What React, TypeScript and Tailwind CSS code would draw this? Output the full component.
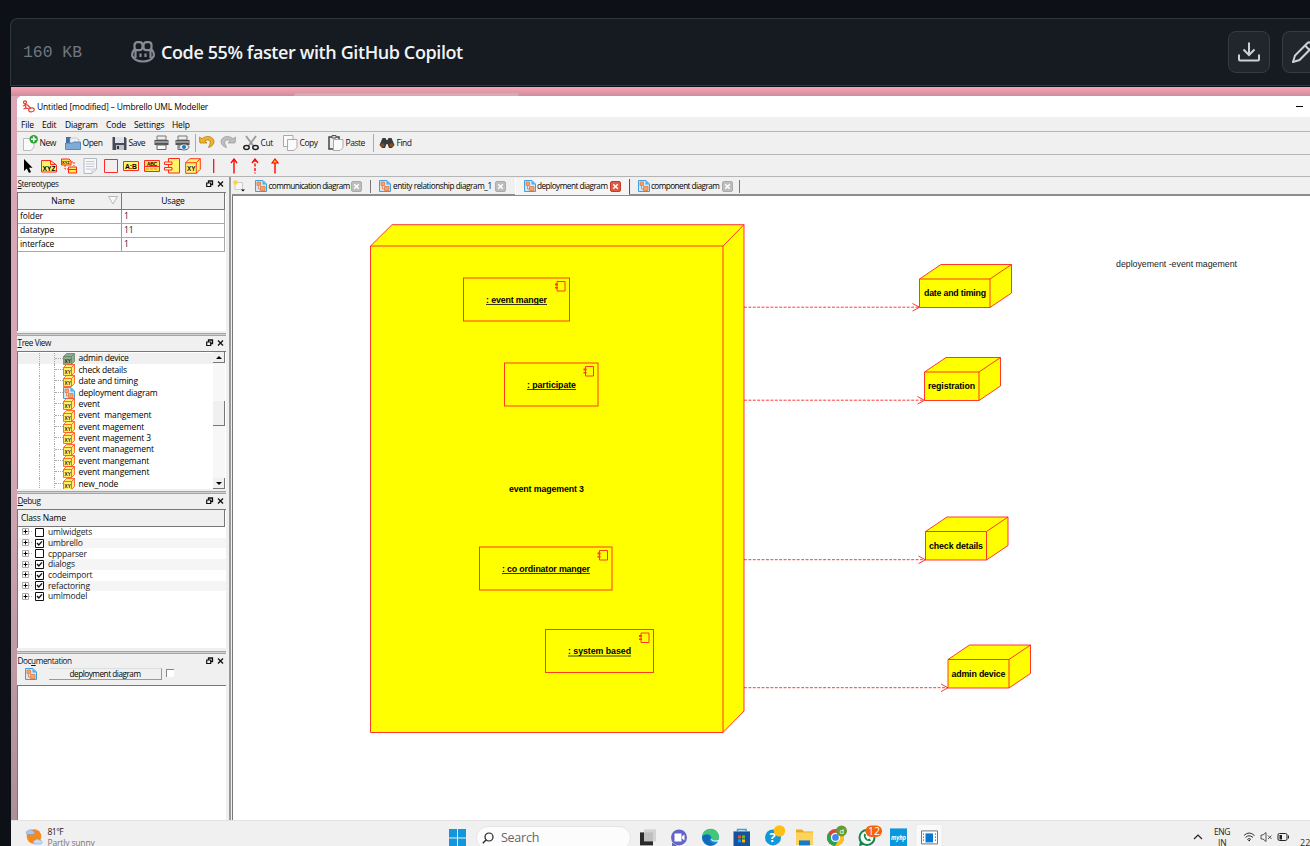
import React from 'react';

const BASE = 'whitespace-pre leading-none';

function NodeIcon({ size = 16, dim = false, className = '' }: { size?: number; dim?: boolean; className?: string }) {
  return (
    <svg width={size} height={size} viewBox="0 0 16 16" className={`shrink-0 ${className}`}>
      <path d="M.7 4.700 4.700.7H15.300V11.300L11.300 15.300H.7Z" fill={dim ? '#8fae8c' : '#fff36b'} stroke={dim ? '#5d7f6c' : '#ff3a1a'} />
      <path d="M.7 4.700H11.300V15.300M11.300 4.700 15.300.7" fill="none" stroke={dim ? '#5d7f6c' : '#ff3a1a'} />
      <text x="2" y="13" fontSize="7" fontWeight="700" textLength="8.5" lengthAdjust="spacingAndGlyphs" fontFamily="Liberation Sans, sans-serif" fill="#222">XY</text>
    </svg>
  );
}

function DiagramIcon({ className = '' }: { className?: string }) {
  return (
    <svg width="12" height="12" viewBox="0 0 12 12" className={`shrink-0 ${className}`}>
      <path d="M.5.5H8L11.500 4V11.500H.5Z" fill="#cfe8fb" stroke="#3f9fe0" />
      <path d="M7.500 .5V4.500H11.500Z" fill="#4aaef0" />
      <path d="M2 2H5.500V5.500H2ZM5.500 6.500H10V10.500H5.500Z" fill="#f3a468" stroke="#e57b45" strokeWidth=".8" />
      <path d="M3.500 6V9H6" fill="none" stroke="#e57b45" strokeWidth=".8" />
    </svg>
  );
}

function DockTitle({ first, rest, mid }: { first: string; rest: string; mid?: [string, string] }) {
  return (
    <div className="flex h-[14px] shrink-0 items-center justify-between bg-[#f0f0f0] pr-[1px] pl-[0.5px]">
      <span className={`${BASE} text-[8.200px] tracking-[-0.400px] text-[#111]`}>
        {mid ? (
          <>{first}<u>{mid[0]}</u>{mid[1]}</>
        ) : (
          <><u>{first}</u>{rest}</>
        )}
      </span>
      <svg width="19" height="8" viewBox="0 0 19 8">
        <path d="M2.500 3V1H6.500V4.500H5" fill="none" stroke="#111" strokeWidth="1.300" />
        <path d="M.7 3H4.700V6.500H.7Z" fill="#f0f0f0" stroke="#111" strokeWidth="1.200" />
        <path d="M12 1.500 17 6.500M17 1.500 12 6.500" stroke="#111" strokeWidth="1.300" />
      </svg>
    </div>
  );
}

function Splitter() {
  return <div className="h-[3px] shrink-0 border-t border-b border-[#a5a5a5] bg-[#d0d0d0]" />;
}

const treeItems = ['admin device', 'check details', 'date and timing', 'deployment diagram', 'event', 'event  mangement', 'event magement', 'event magement 3', 'event management', 'event mangemant', 'event mangement', 'new_node'];

const debugItems: [string, boolean][] = [['umlwidgets', false], ['umbrello', true], ['cppparser', false], ['dialogs', true], ['codeimport', true], ['refactoring', true], ['umlmodel', true]];

function LeftDock() {
  return (
    <div className="flex w-[209px] shrink-0 flex-col bg-[#f0f0f0]">
      <DockTitle first="S" rest="tereotypes" />
      <div className="mt-[1px] flex h-[139px] shrink-0 flex-col border-t border-l border-[#777] bg-white pr-[1px]">
        <div className="grid h-[17px] shrink-0 grid-cols-[104px_1fr] border-r border-b border-[#777] bg-[#f0f0f0] text-[8.5px]">
          <div className="relative flex items-center justify-center border-r border-[#777] pr-[13px]">
            <span className={`${BASE} tracking-[-0.1px]`}>Name</span>
            <svg className="absolute top-[3px] right-[3px]" width="10" height="9" viewBox="0 0 10 9"><path d="M.5 .5H9.500L5 8Z" fill="#f7f7f7" stroke="#aaa" strokeWidth=".8" /></svg>
          </div>
          <div className="flex items-center justify-center"><span className={`${BASE} tracking-[-0.2px]`}>Usage</span></div>
        </div>
        {[['folder', '1'], ['datatype', '11'], ['interface', '1']].map(([a, b]) => (
          <div key={a} className="grid h-[14px] shrink-0 grid-cols-[104px_1fr] border-r border-b border-[#aaa] text-[8.5px]">
            <div className="flex items-center border-r border-[#999] pl-[2px]"><span className={`${BASE} tracking-[-0.1px]`}>{a}</span></div>
            <div className="flex items-center pl-[2px]"><span className={`${BASE} text-[#301030]`}>{b}</span></div>
          </div>
        ))}
      </div>
      <div className="h-[2px] shrink-0" />
      <Splitter />
      <DockTitle first="T" rest="ree View" />
      <div className="mt-[1px] flex h-[138px] shrink-0 border-t border-l border-[#777] bg-white pr-[1px]">
        <div className="flex flex-1 flex-col overflow-hidden pt-[1px]">
          {treeItems.map((t, i) => (
            <div key={t} className={`flex h-[11.380px] shrink-0 items-center ${i === 0 ? 'bg-[#f0f0f0]' : ''}`}>
              <div className="ml-[21px] h-full w-[15px] shrink-0 border-l border-dotted border-[#aaa]" />
              <div className="h-full w-[8.500px] shrink-0 border-l border-dotted border-[#aaa]"><div className="h-1/2 w-[8px] border-b border-dotted border-[#aaa]" /></div>
              {i === 3 ? <DiagramIcon /> : <NodeIcon size={12} dim={i === 0} />}
              <span className={`${BASE} ml-[4px] text-[8.5px] ${i < 4 ? 'tracking-[-0.2px]' : 'tracking-[-0.1px]'}`}>{t}</span>
            </div>
          ))}
        </div>
        <div className="flex w-[12px] shrink-0 flex-col bg-[#f7f7f7]">
          <div className="flex h-[11px] items-center justify-center border-r border-b border-[#777] bg-[#f0f0f0]"><svg width="6" height="3"><path d="M0 3 3 0 6 3Z" /></svg></div>
          <div className="mt-[38px] h-[25px] border-r border-b border-[#777] bg-[#f0f0f0]" />
          <div className="mt-auto flex h-[11px] items-center justify-center border-r border-b border-[#777] bg-[#f0f0f0]"><svg width="6" height="3"><path d="M0 0 3 3 6 0Z" /></svg></div>
        </div>
      </div>
      <div className="h-[2px] shrink-0" />
      <Splitter />
      <DockTitle first="D" rest="ebug" />
      <div className="mt-[1px] flex h-[139px] shrink-0 flex-col border-t border-l border-[#777] bg-white">
        <div className="mr-[1px] flex h-[17px] shrink-0 items-center border-r border-b border-[#777] bg-[#f0f0f0] pt-[1px] pl-[3px]"><span className={`${BASE} text-[8.5px] tracking-[-0.15px]`}>Class Name</span></div>
        {debugItems.map(([t, on], i) => (
          <div key={t} className={`flex h-[10.73px] shrink-0 items-center pl-[4px] ${i % 2 ? 'bg-[#f5f5f5]' : ''}`}>
            <svg width="10" height="8" viewBox="0 0 10 8"><path d="M.5.5H6.500V6.500H.5Z" fill="#fff" stroke="#aaa" /><path d="M1.500 3.500H5.500M3.500 1.500V5.500" stroke="#000" /><path d="M7 3.500H10" stroke="#bbb" strokeDasharray="1 1" /></svg>
            <svg width="9" height="9" viewBox="0 0 9 9" className="ml-[3px]"><path d="M.5.5H8.500V8.500H.5Z" fill="#fff" stroke="#111" />{on && <path d="M2 4 3.800 6 7 2.400" fill="none" stroke="#111" strokeWidth="1.400" />}</svg>
            <span className={`${BASE} ml-[4px] text-[8.5px] tracking-[-0.15px] text-[#222]`}>{t}</span>
          </div>
        ))}
      </div>
      <div className="h-[3px] shrink-0" />
      <Splitter />
      <DockTitle first="Doc" rest="" mid={['u', 'mentation']} />
      <div className="flex h-[17px] shrink-0 items-start pl-[8px]">
        <DiagramIcon />
        <div className="ml-[12px] flex h-[12px] w-[113px] items-center justify-center border-t border-r border-b border-t-[#ddd] border-r-[#999] border-b-[#999] text-[8.200px]"><span className={`${BASE} tracking-[-0.470px]`}>deployment diagram</span></div>
        <div className="mt-[1px] ml-[4px] h-[8px] w-[8px] border-t border-l border-[#888] bg-white" />
      </div>
      <div className="flex-1 border-t border-l border-[#777] bg-white" />
    </div>
  );
}

function Lbl({ children }: { children: string }) {
  return <span className={`${BASE} ml-[1.500px] pt-[1px] text-[8.5px] tracking-[-0.470px] text-[#111]`}>{children}</span>;
}

const Page = ({ x = 0, y = 0 }: { x?: number; y?: number }) => <path d={`M${x + 0.5} ${y + 0.5}h9.5v8l-3 3H${x + 0.5}Z`} fill="#fafafa" stroke="#aaa" />;

function Printer({ eye = false }: { eye?: boolean }) {
  return (
    <svg width="15" height="16" viewBox="0 0 15 16">
      <path d="M3 1H12V5H3Z" fill="#eee" stroke="#777" /><path d="M.5 5H14.500V10H.5Z" fill="#555" /><path d="M1 7H14" stroke="#ddd" />
      <path d="M3 10H12V14.500H3Z" fill="#fafafa" stroke="#666" />
      {eye && <g><ellipse cx="9" cy="12" rx="5" ry="3" fill="#dbe9f7" stroke="#444" strokeWidth=".7" /><circle cx="9" cy="12" r="2" fill="#2877b8" /></g>}
    </svg>
  );
}

function Toolbar() {
  return (
    <div className="flex h-[23px] shrink-0 items-center border-b border-[#b5b5b5] pl-[6px]">
      <div className="flex w-[42px] items-center">
        <svg width="15" height="16" viewBox="0 0 15 16"><path d="M.5 3.500H11V12L8 15.500H.5Z" fill="#fafafa" stroke="#bbb" /><circle cx="10.700" cy="4.300" r="4.200" fill="#27a52b" /><path d="M8 4.300H13.400M10.700 1.600V7" stroke="#fff" strokeWidth="1.600" /></svg>
        <Lbl>New</Lbl>
      </div>
      <div className="flex w-[47px] items-center">
        <svg width="16" height="16" viewBox="0 0 16 16"><path d="M1 14V2H6V4H14V13Z" fill="#426fa5" /><path d="M5 3H12L14 5V10H5Z" fill="#eee" stroke="#aaa" strokeWidth=".5" /><path d="M.5 14.500V8H7L9 7H15.500V14.500Z" fill="#7eabd8" stroke="#4778ad" strokeWidth=".8" /></svg>
        <Lbl>Open</Lbl>
      </div>
      <div className="flex w-[42px] items-center">
        <svg width="15" height="16" viewBox="0 0 15 16"><path d="M.5 2H13L14.500 3.500V15H.5Z" fill="#454b57" /><path d="M3 2H12V8H3Z" fill="#dfe2e7" /><path d="M4 10H12V15H4Z" fill="#bcc3ce" /><path d="M5 11H7V14H5Z" fill="#333" /></svg>
        <Lbl>Save</Lbl>
      </div>
      <div className="w-[21px]"><Printer /></div>
      <div className="w-[20px]"><Printer eye /></div>
      <div className="h-[18px] w-[4px] border-l border-[#aaa]" />
      <svg className="mr-[5px] mb-[2px]" width="16" height="14" viewBox="0 0 16 14"><path d="M0 2 1 8H8L5.700 5.800C9 4 12 5 11 9L9.500 12.500C15 11 17 5.500 12.500 2.500 9.500.7 6 1.200 3.200 3.600Z" fill="#f1b22a" stroke="#a87510" strokeWidth=".7" /></svg>
      <svg className="mr-[7px] mb-[2px]" width="16" height="14" viewBox="0 0 16 14"><path d="M16 2 15 8H8L10.300 5.800C7 4 4 5 5 9L6.500 12.500C1 11-1 5.500 3.500 2.500 6.500.700 10 1.200 12.800 3.600Z" fill="#bdbdbd" stroke="#999" strokeWidth=".7" /></svg>
      <div className="flex w-[40px] items-center">
        <svg width="16" height="16" viewBox="0 0 16 16"><path d="M3 1 10.500 11M13 1 5.500 11" stroke="#999" strokeWidth="1.800" /><ellipse cx="3.500" cy="12.500" rx="2.700" ry="2" fill="none" stroke="#222" strokeWidth="1.500" /><ellipse cx="12.500" cy="12.500" rx="2.700" ry="2" fill="none" stroke="#222" strokeWidth="1.500" /></svg>
        <Lbl>Cut</Lbl>
      </div>
      <div className="flex w-[45px] items-center">
        <svg width="15" height="16" viewBox="0 0 15 16"><Page x={0} y={0} /><Page x={4} y={4} /></svg>
        <Lbl>Copy</Lbl>
      </div>
      <div className="flex w-[45px] items-center">
        <svg width="16" height="16" viewBox="0 0 16 16"><path d="M1 2H11V14H1Z" fill="#eee" stroke="#444" strokeWidth="1.500" /><path d="M4 .5H8V3H4Z" fill="#ddd" stroke="#555" /><Page x={5} y={4} /></svg>
        <Lbl>Paste</Lbl>
      </div>
      <div className="h-[18px] w-[6px] border-l border-[#aaa]" />
      <svg width="16" height="12" viewBox="0 0 16 12"><path d="M3.500 1H6.500L7.500 3H8.500L9.500 1H12.500L15.500 8 13 11H10L8.500 7H7.500L6 11H3L.5 8Z" fill="#3a3a3a" /><circle cx="3.500" cy="8.300" r="2" fill="#8b4a1c" /><circle cx="12.500" cy="8.300" r="2" fill="#8b4a1c" /></svg>
      <Lbl>Find</Lbl>
    </div>
  );
}

function WorkTools() {
  const cell = 'flex w-[20.6px] shrink-0 justify-center';
  const t = { fontFamily: 'Liberation Sans, sans-serif', fontWeight: 700 };
  return (
    <div className="flex h-[22px] shrink-0 items-center border-b border-[#b5b5b5] pl-[1px]">
      <div className={cell}><svg width="16" height="16" viewBox="0 0 16 16"><path d="M4 1V13L6.800 10.500 9 15 11 14 9 9.800H12.500Z" /></svg></div>
      <div className={cell}><svg width="16" height="16" viewBox="0 0 16 16"><path d="M.5 2.500H9.500L15.500 7V14H.5Z" fill="#fff36b" stroke="#ff2a1a" /><path d="M9.500 2.500V6.500H15" fill="none" stroke="#ff2a1a" /><text {...t} x="1.500" y="12.500" fontSize="6.500" textLength="13" lengthAdjust="spacingAndGlyphs">XYZ</text></svg></div>
      <div className={cell}><svg width="16" height="16" viewBox="0 0 16 16"><path d="M.5 1H8L10 3V7H.5Z" fill="#ffe44b" stroke="#ff2a1a" /><path d="M10 4H13V8M4 7V11H7" fill="none" stroke="#ff2a1a" strokeDasharray="2 1" /><path d="M7.500 9H15.500V15H7.500ZM7.500 11.500H15.500" fill="#ffe44b" stroke="#ff2a1a" /><text {...t} x="1" y="6" fontSize="4">XYZ</text></svg></div>
      <div className={cell}><svg width="16" height="16" viewBox="0 0 16 16"><path d="M2 .5H14.500V11L10 15.500H2Z" fill="#f5f7f9" stroke="#b3b8bd" /><path d="M4 3.500H12.500M4 6H12.500M4 8.500H12M4 11H9M10 15V11H14" fill="none" stroke="#c2c8cf" /></svg></div>
      <div className={cell}><svg width="16" height="16" viewBox="0 0 16 16"><path d="M1.500 1.500H14.500V14.500H1.500Z" fill="#f5eeee" stroke="#ff2a2a" /></svg></div>
      <div className={cell}><svg width="16" height="16" viewBox="0 0 16 16"><path d="M.5 3.500H15.500V12.500H.5Z" fill="#fff36b" stroke="#ff2a1a" /><text {...t} x="2" y="10.500" fontSize="6.500" textLength="12" lengthAdjust="spacingAndGlyphs">A:B</text></svg></div>
      <div className={cell}><svg width="16" height="16" viewBox="0 0 16 16"><path d="M.5 2.500H15.500V13.500H.5ZM.5 8.500H15.500" fill="#ffe44b" stroke="#ff2a1a" /><path d="M2 11H14" stroke="#ff8a4a" strokeDasharray="3 1" /><text {...t} x="3" y="7.500" fontSize="5" textLength="10">ABC</text></svg></div>
      <div className={cell}><svg width="16" height="16" viewBox="0 0 16 16"><path d="M4.500.5H15.500V15H4.500Z" fill="#fff36b" stroke="#ff2a1a" /><path d="M.5 4H8V6.500H.5ZM.5 9.500H8V12H.5Z" fill="#fffac0" stroke="#ff2a1a" /></svg></div>
      <div className={cell}><NodeIcon /></div>
      <div className={cell}><svg width="16" height="16" viewBox="0 0 16 16"><path d="M7.700 1V15" stroke="red" strokeWidth="1.200" /></svg></div>
      <div className={cell}><svg width="16" height="16" viewBox="0 0 16 16"><path d="M8 1V15.500" stroke="red" strokeWidth="1.400" /><path d="M5 5 8 1 11 5" fill="none" stroke="red" strokeWidth="1.300" /></svg></div>
      <div className={cell}><svg width="16" height="16" viewBox="0 0 16 16"><path d="M8 1V15.500" stroke="red" strokeWidth="1.400" strokeDasharray="3 1.500" /><path d="M5 5 8 1 11 5" fill="none" stroke="red" strokeWidth="1.300" /></svg></div>
      <div className={cell}><svg width="16" height="16" viewBox="0 0 16 16"><path d="M8 5V15.500" stroke="red" strokeWidth="1.400" /><path d="M5 5 8 1 11 5Z" fill="#ffe000" stroke="red" strokeWidth="1.200" /></svg></div>
    </div>
  );
}

function Close({ active = false }: { active?: boolean }) {
  return <svg width="11" height="11" viewBox="0 0 11 11" className="ml-[2px] shrink-0"><rect x=".5" y=".5" width="10" height="10" rx="1.500" fill={active ? '#dc5b42' : '#bdbdbd'} stroke={active ? '#c23d27' : '#ababab'} /><path d="M3.200 3.200 7.800 7.800M7.800 3.200 3.200 7.800" stroke="#fff" strokeWidth="1.500" /></svg>;
}

function Tabs() {
  const label = `${BASE} shrink-0 text-[8.200px]`;
  return (
    <div className="flex h-[19px] shrink-0 items-center border-b-2 border-[#8c8c8c] pt-[1px]">
      <svg className="mr-[10px] ml-[1px] shrink-0" width="12" height="12" viewBox="0 0 12 12"><path d="M2 2.500H9.500V9.500H2Z" fill="#f7f7f7" stroke="#ccc" /><circle cx="2.500" cy="2.500" r="2.200" fill="#ffd52e" /><path d="M8 9.500H12L10 11.500Z" /></svg>
      <div className="flex w-[115px] items-center"><DiagramIcon /><span className={`${label} ml-[1.5px] w-[80.5px] tracking-[-0.57px]`}>communication diagram</span><Close /></div>
      <div className="h-[13px] w-[9px] border-l border-[#777]" />
      <div className="flex w-[136px] items-center"><DiagramIcon /><span className={`${label} ml-[2px] w-[100px] tracking-[-0.43px]`}>entity relationship diagram_1</span><Close /></div>
      <div className="flex h-[17px] w-[113.5px] items-center border-l border-[#fff] bg-[#f5f5f5] pl-[7.5px]"><DiagramIcon /><span className={`${label} ml-[1.5px] w-[70.5px] tracking-[-0.5px]`}>deployment diagram</span><Close active /></div>
      <div className="h-[15px] w-[9px] border-l border-[#555]" />
      <div className="flex w-[101.5px] items-center"><DiagramIcon /><span className={`${label} ml-[1.5px] w-[69px] tracking-[-0.55px]`}>component diagram</span><Close /></div>
      <div className="h-[13px] border-l border-[#777]" />
    </div>
  );
}

const boxes = [
  { x: 463.5, y: 278, w: 106, label: ': event manger', tx: 486, tw: 61 },
  { x: 504.5, y: 363, w: 93.5, label: ': participate', tx: 527, tw: 49 },
  { x: 479.5, y: 547, w: 132.5, label: ': co ordinator manger', tx: 502, tw: 88 },
  { x: 545.5, y: 629.5, w: 108, label: ': system based', tx: 568, tw: 63 },
];

const nodes = [
  { x: 919.5, y: 279, w: 70.5, label: 'date and timing', tx: 924, tw: 62 },
  { x: 924.5, y: 372, w: 54.5, label: 'registration', tx: 928, tw: 47 },
  { x: 925.5, y: 531.5, w: 61, label: 'check details', tx: 929, tw: 54 },
  { x: 948, y: 659.5, w: 61, label: 'admin device', tx: 951.5, tw: 54 },
];

function Diagram() {
  return (
    <svg className="block" width="1077" height="624" viewBox="233 196 1077 624" fontFamily="Liberation Sans, Arial, sans-serif" fontSize="8.800">
      <g fill="#ff0" stroke="#f22" strokeWidth=".9">
        <path d="M370.500 246 392 224.700H744V711L723 732.500H370.500Z" />
        <path d="M370.500 246H723V732.500M723 246 744 224.700" fill="none" />
      </g>
      <text x="509" y="492" fontWeight="700" textLength="75">event magement 3</text>
      {boxes.map((b) => (
        <g key={b.label}>
          <rect x={b.x} y={b.y} width={b.w} height="43" fill="#ff0" stroke="#ff3b1a" />
          <path d={`M${b.x + b.w - 12.5} ${b.y + 3.5}h8v9.500h-8Z`} fill="#ff0" stroke="#ff3b1a" />
          <path d={`M${b.x + b.w - 14.5} ${b.y + 5.5}h3v2h-3ZM${b.x + b.w - 14.5} ${b.y + 9}h3v1.500h-3Z`} fill="#ff3b1a" />
          <text x={b.tx} y={b.y + 24.9} fontWeight="700" textLength={b.tw}>{b.label}</text>
          <path d={`M${b.tx} ${b.y + 26.5}h${b.tw}`} stroke="#222" strokeWidth=".9" />
        </g>
      ))}
      {nodes.map((n) => (
        <g key={n.label}>
          <path d={`M744 ${n.y + 28.2}H${n.x}`} stroke="#f22" strokeWidth=".9" strokeDasharray="2.900 1.500" />
          <path d={`M${n.x - 7} ${n.y + 24.5}l7 3.800 -7 3.800`} fill="none" stroke="#f22" strokeWidth=".9" />
          <path d={`M${n.x} ${n.y}l21.500 -14.500h${n.w}v28.500l-21.500 14.500h${-n.w}Z`} fill="#ff0" stroke="#f22" strokeWidth=".9" />
          <path d={`M${n.x} ${n.y}h${n.w}v28.500m0 -28.500l21.500 -14.500`} fill="none" stroke="#f22" strokeWidth=".9" />
          <text x={n.tx} y={n.y + 17.2} fontWeight="700" textLength={n.tw}>{n.label}</text>
        </g>
      ))}
      <text x="1116" y="267" textLength="121" fill="#222">deployement -event magement</text>
    </svg>
  );
}

function Taskbar() {
  return (
    <div className="flex h-[26px] shrink-0 border-t border-[#e2e2e2] bg-[#f0f0f0] font-['Open_Sans',sans-serif]">
      <div className="flex w-[438px] shrink-0 pt-[5px] pl-[14px]">
        <svg className="mt-[2px]" width="18" height="18" viewBox="0 0 18 18"><circle cx="9" cy="8.500" r="7.300" fill="#f78a1d" /><path d="M2 6.500A2.300 2.300 0 0 1 3.500 2.500 3 3 0 0 1 8 3 2.200 2.200 0 0 1 9 6.500Z" fill="#a9c6ee" stroke="#6c94cf" strokeWidth=".5" /><path d="M9 16A2.300 2.300 0 0 1 10 12 3 3 0 0 1 14.500 12 2.200 2.200 0 0 1 16 16Z" fill="#c6dcf8" stroke="#6c94cf" strokeWidth=".5" /></svg>
        <div className="ml-[4.500px] text-[8.5px] leading-[11px] text-[#222]"><div className="tracking-[-0.5px]">81°F</div><div className="tracking-[-0.150px] whitespace-nowrap text-[#777]">Partly sunny</div></div>
      </div>
      <svg className="mt-[8px] w-[17px] shrink-0" height="18" viewBox="0 0 17 18"><path d="M0 0H8V8.500H0ZM9 0H17V8.500H9ZM0 9.500H8V18H0ZM9 9.500H17V18H9Z" fill="#1496df" /></svg>
      <div className="mt-[5px] ml-[10px] flex h-[24px] w-[155px] shrink-0 rounded-full border border-[#e5e5e5] bg-[#fcfcfc] pt-[5px] pl-[5px]">
        <svg width="12" height="12" viewBox="0 0 12 12"><circle cx="7" cy="5" r="4" fill="none" stroke="#222" strokeWidth="1.200" /><path d="M4 8 .8 11.300" stroke="#222" strokeWidth="1.300" /></svg>
        <span className="ml-[7px] text-[12.5px] leading-[12px] tracking-[-0.25px] text-[#666]">Search</span>
      </div>
      <svg className="block shrink-0" width="312" height="26" viewBox="631 820.600 312 26">
        <path d="M640 832H653V845H640Z" fill="#2b2b2b" /><path d="M644 829H656V841H644Z" fill="#cfcfcf" opacity=".9" />
        <circle cx="679" cy="837" r="8" fill="#6264c7" /><path d="M672 842V846H678Z" fill="#6264c7" /><path d="M674.500 833H681.500V841H674.500ZM682 836 684.500 834V840L682 838Z" fill="#fff" />
        <circle cx="710.500" cy="837" r="8.500" fill="#1688d1" /><path d="M702 836C703 827 716 825 719 835 720 841 713 841 711 839 713 835 708 832 702 836Z" fill="#40c878" /><path d="M702 836C707 832 712 835 710 838 708 841 712 845 716 843 711 847 703 845 702 836Z" fill="#1268bd" /><path d="M711 839C713 841 716 841 719 840" fill="none" stroke="#e6f8ff" strokeWidth="1.200" />
        <path d="M733.500 831H750V846H733.500Z" fill="#17529c" /><path d="M737.500 831V829H746V831" fill="none" stroke="#27a8e0" strokeWidth="1.500" /><path d="M738 835H741V838H738Z" fill="#f25022" /><path d="M742 835H745V838H742Z" fill="#7fba00" /><path d="M738 839H741V842H738Z" fill="#00a4ef" /><path d="M742 839H745V842H742Z" fill="#ffb900" />
        <circle cx="773" cy="837" r="8" fill="#1297d8" /><text x="769.500" y="842" fontSize="13" fontWeight="700" fill="#fff">?</text><circle cx="779.500" cy="830.500" r="5.700" fill="#ffc013" />
        <path d="M796 829H802L804 831H813V844H796Z" fill="#e9aa22" /><path d="M796 832H813V844H796Z" fill="#ffd35b" /><path d="M799 840H810V845H799Z" fill="#137bc8" />
        <circle cx="835.500" cy="837" r="8.500" fill="#e34133" /><path d="M835.500 837 843.500 834A8.500 8.500 0 0 1 835 845.500Z" fill="#fbc116" /><path d="M835.500 837 828 833A8.500 8.500 0 0 0 835 845.500L839 839Z" fill="#2ba24c" /><circle cx="835.500" cy="837" r="4" fill="#4285f4" stroke="#fff" strokeWidth="1.300" /><circle cx="841.500" cy="830.500" r="5.500" fill="#669c35" /><text x="839.500" y="833.500" fontSize="7.500" fill="#fff">d</text>
        <circle cx="867" cy="837" r="7.500" fill="#f7fff9" stroke="#168450" strokeWidth="2" /><path d="M860 841 859 846 864 844Z" fill="#168450" /><path d="M864 833C863 838 867 842 871 840L869.500 838 867.500 839 865.500 836 866 834Z" fill="#168450" /><rect x="865.500" y="825" width="16.500" height="11.500" rx="5.700" fill="#f7630c" /><text x="868" y="834.500" fontSize="10" textLength="12" lengthAdjust="spacingAndGlyphs" fill="#fff">12</text>
        <path d="M890 828H907V846H890Z" fill="#0b97dc" /><text x="891" y="839.500" fontSize="7" fontStyle="italic" fontWeight="700" textLength="15" lengthAdjust="spacingAndGlyphs" fill="#fff">myhp</text>
        <rect x="916" y="824" width="26" height="24" rx="2" fill="#fafafa" stroke="#e2e2e2" strokeWidth=".5" /><path d="M921.500 830.500H937.500V843.500H921.500Z" fill="#fff" stroke="#777" /><path d="M925.500 833H933V842H925.500Z" fill="#0878d1" /><path d="M923.500 833V842M935.500 833V842" stroke="#777" strokeDasharray="1.500 1.500" />
      </svg>
      <svg className="block shrink-0" width="356" height="26" viewBox="943 821 356 26">
        <path d="M1194 839 1198 835 1202 839" fill="none" stroke="#222" strokeWidth="1.200" />
        <text x="1214" y="835" fontSize="8.500" textLength="16.500" fill="#222">ENG</text><text x="1218" y="846" fontSize="8.500" fill="#222">IN</text>
        <path d="M1244 835.500Q1249 830.500 1254.500 835.500M1245.500 837.500Q1249 834 1253 837.500M1247.300 839.500Q1249 837.500 1251 839.500" fill="none" stroke="#333" /><circle cx="1249.200" cy="840.500" r=".8" />
        <path d="M1261 835H1263L1266 832.500V841.500L1263 839H1261ZM1268 835.500 1271.500 839M1271.500 835.500 1268 839" fill="none" stroke="#444" strokeWidth=".9" />
        <rect x="1278" y="833.500" width="9" height="7" rx="1.500" fill="none" stroke="#222" /><path d="M1279.500 835H1282V839.500H1279.500ZM1288 835.500H1289V838.500H1288Z" fill="#222" />
      </svg>
      <span className="mt-[17px] ml-[1px] text-[9px] leading-[9px] text-[#333]">22</span>
    </div>
  );
}

export default function App() {
  return (
    <div className="flex h-[846px] w-[1310px] flex-col overflow-hidden bg-[#0d1117] pt-[18px] pl-[10px] font-['Open_Sans',sans-serif] text-black">
      <div className="flex h-[68px] shrink-0 items-center rounded-tl-[8px] border-t border-b border-l border-[#30363d] bg-[#161b22] pl-[12px]">
        <span className="w-[108px] shrink-0 pt-[3px] font-['Liberation_Mono',monospace] text-[16.400px] text-[#6e7681]">160 KB</span>
        <svg width="24" height="22" viewBox="0 0 24 22" className="shrink-0" fill="none" stroke="#848d97" strokeWidth="2.200">
          <rect x="3.500" y="1.200" width="8" height="8" rx="3" /><rect x="12.500" y="1.200" width="8" height="8" rx="3" />
          <path d="M3.500 8 2 10.500Q1 11.500 1.200 15 4 20.500 12 20.500T22.800 15Q23 11.500 22 10.500L20.500 8M4.500 9V17M19.500 9V17" />
          <path d="M9.500 12.500V16M14.500 12.500V16" />
        </svg>
        <span className={`${BASE} ml-[6px] text-[18px] font-semibold tracking-[-0.400px] text-[#f0f4f8]`}>Code 55% faster with GitHub Copilot</span>
        <div className="ml-auto flex shrink-0 gap-[12px]">
          <div className="flex h-[42px] w-[42px] items-center justify-center rounded-[8px] border border-[#363b42] bg-[#21262d]">
            <svg width="22" height="20" viewBox="0 0 22 20" fill="none" stroke="#c9d1d9" strokeWidth="2"><path d="M11 .5V13M5.500 7.500 11 13 16.500 7.500M1 12.500V17.500Q1 18.500 2 18.500H20Q21 18.500 21 17.500V12.500" /></svg>
          </div>
          <div className="flex h-[42px] w-[28px] items-center overflow-hidden rounded-l-[8px] border-t border-b border-l border-[#363b42] bg-[#21262d] pl-[9px]">
            <svg width="22" height="22" viewBox="0 0 22 22" className="shrink-0" fill="none" stroke="#c9d1d9" strokeWidth="2"><path d="M1 21 3 14.500 15.500 2Q17 .5 18.500 2L20 3.500Q21.500 5 20 6.500L7.500 19ZM13 4.500 17.500 9" /></svg>
          </div>
        </div>
      </div>
      <div className="mt-[1px] ml-[1px] flex flex-1 flex-col">
        <div className="flex h-[733px] flex-col bg-linear-to-b from-[#dca7b4] via-[#d5a8b4] to-[#ad8f96]">
          <div className="h-[9px] shrink-0 bg-linear-to-b from-[#f8a5b5] to-[#cf8c9b] pt-[6px]">
            <div className="ml-[283px] h-[3px] w-[225px] rounded-t bg-[#d5abb2]" />
          </div>
          <div className="ml-[6px] flex min-h-0 flex-1 flex-col overflow-hidden rounded-tl-[5px] bg-[#f0f0f0]">
            <div className="flex h-[21px] shrink-0 items-center bg-white pl-[5px]">
              <svg width="13" height="13" viewBox="0 0 13 13" fill="none" stroke="#e03a2a" strokeWidth="1.200"><circle cx="3" cy="2.300" r="1.500" /><path d="M3 4 4 8M1 6 5.500 4.500M4 8 1.500 9M4 8 7 9M5.500 5 9 8.500" /><ellipse cx="9.500" cy="10" rx="2.800" ry="1.900" transform="rotate(-15 9 10)" /></svg>
              <span className={`${BASE} ml-[2px] pt-[1px] text-[8.5px] tracking-[-0.170px]`}>Untitled [modified] – Umbrello UML Modeller</span>
              <div className="mr-[7px] ml-auto h-[1px] w-[7px] bg-black" />
            </div>
            <div className="flex h-[15px] shrink-0 items-center border-b border-[#b5b5b5] pt-[2px] pl-[4px] text-[8.500px] tracking-[-0.150px]">
              <span className={`${BASE} w-[21px]`}>File</span><span className={`${BASE} w-[23px]`}>Edit</span><span className={`${BASE} w-[41px]`}>Diagram</span><span className={`${BASE} w-[28px]`}>Code</span><span className={`${BASE} w-[38px]`}>Settings</span><span className={BASE}>Help</span>
            </div>
            <Toolbar />
            <WorkTools />
            <div className="flex min-h-0 flex-1">
              <LeftDock />
              <div className="w-[6px] shrink-0 pl-[3px]"><div className="h-full w-[2px] border-r border-l border-[#999] bg-[#bbb]" /></div>
              <div className="flex min-w-0 flex-1 flex-col">
                <Tabs />
                <div className="min-h-0 flex-1 border-l border-[#777] bg-white"><Diagram /></div>
              </div>
            </div>
          </div>
        </div>
        <Taskbar />
      </div>
    </div>
  );
}
